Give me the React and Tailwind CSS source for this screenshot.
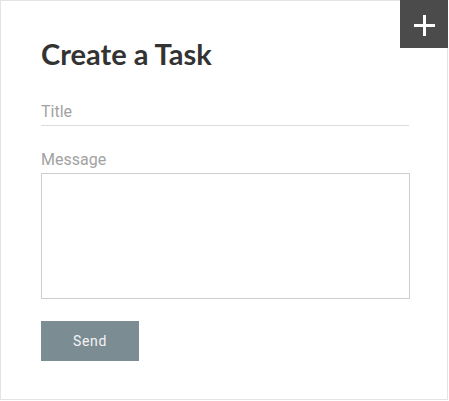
import React from 'react'

export default function App() {
  return (
    <div className="w-[449px] h-[401px] bg-white">
      <div className="relative w-[448px] h-[400px] border border-[#e3e3e3] bg-white px-[40px] pt-[37px]">
        {/* add button */}
        <button className="absolute -top-px -right-px w-[48px] h-[48px] bg-[#4b4b4b] flex items-center justify-center pt-[2px]">
          <svg width="21" height="21" viewBox="0 0 21 21">
            <path d="M10.5 0v21M0 10.5h21" stroke="#fff" strokeWidth="3" fill="none" />
          </svg>
        </button>

        <h1 className="text-[29px] leading-[32px] font-bold text-[#333] font-['Lato',sans-serif]">
          Create a Task
        </h1>

        <input
          className="block mt-[29px] w-[368px] pt-[3px] pb-[3px] text-[16px] leading-[20px] border-b border-[#dcdcdc] outline-none placeholder:text-[#a2a2a2] font-['Roboto',sans-serif]"
          placeholder="Title"
        />

        <label className="block mt-[24px] text-[16px] leading-[20px] text-[#a2a2a2] font-['Roboto',sans-serif]">
          Message
        </label>
        <textarea className="block mt-[3px] w-[369px] h-[126px] border border-[#cfcfcf] resize-none outline-none" />

        <button className="mt-[22px] w-[98px] h-[40px] bg-[#7b8c93] text-[#f4f4f4] text-[14px] tracking-[0.6px] font-['Roboto',sans-serif]">
          Send
        </button>
      </div>
    </div>
  )
}
